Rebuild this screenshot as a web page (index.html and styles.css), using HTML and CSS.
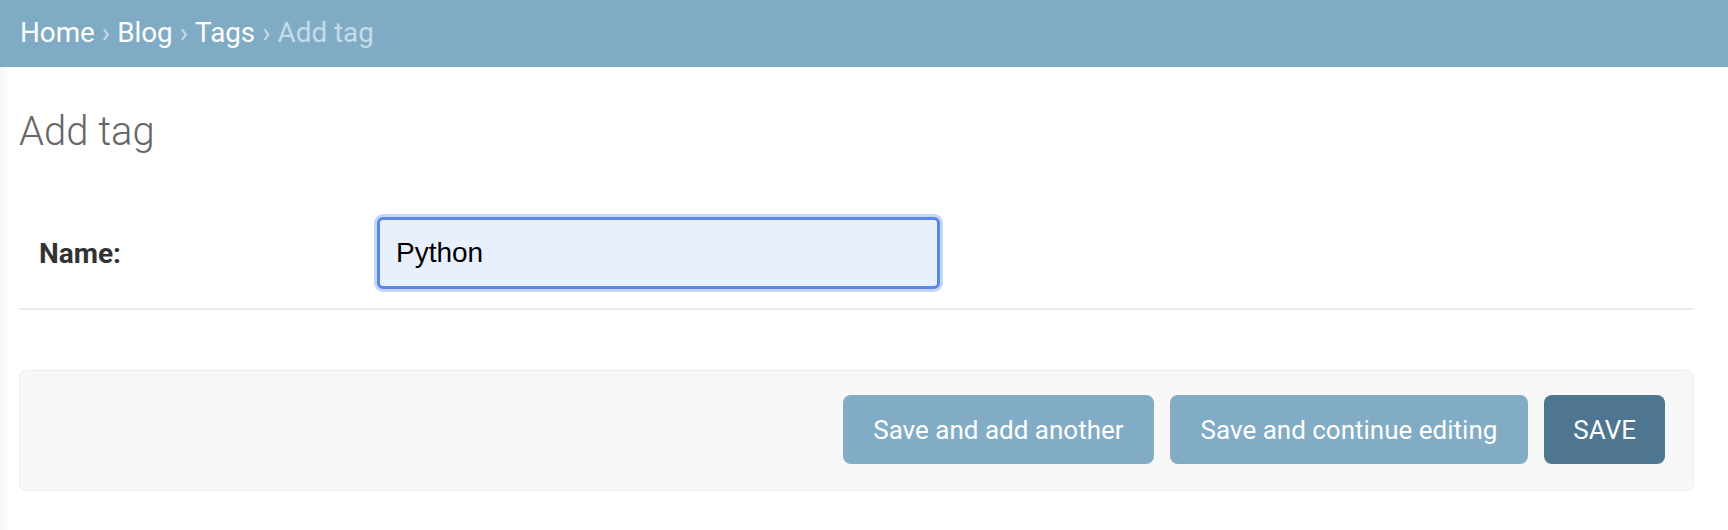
FILE: index.html
```html
<!DOCTYPE html>
<html lang="en">
<head>
<meta charset="utf-8">
<title>Add tag</title>
<link rel="stylesheet" href="styles.css">
</head>
<body>
<div class="breadcrumbs">
  <a href="#">Home</a><span class="sep">›</span><a href="#">Blog</a><span class="sep">›</span><a href="#">Tags</a><span class="sep">›</span><span class="current">Add tag</span>
</div>
<div class="main">
  <div class="nav-toggle"></div>
  <div class="content">
    <h1 class="title">Add tag</h1>
    <form class="form">
      <div class="form-row">
        <label class="label" for="id_name">Name:</label>
        <input class="input" id="id_name" type="text" value="Python">
      </div>
      <div class="submit-row">
        <button type="button" class="btn btn-light">Save and add another</button>
        <button type="button" class="btn btn-light btn-wide">Save and continue editing</button>
        <button type="button" class="btn btn-default">SAVE</button>
      </div>
    </form>
  </div>
</div>
</body>
</html>
```
FILE: styles.css
```css
html, body {
  margin: 0;
  padding: 0;
  background: #fff;
}
body {
  font-family: Roboto, "Liberation Sans", sans-serif;
  color: #333;
}
.breadcrumbs {
  background: #80abc5;
  color: #c4dce8;
  font-size: 27.8px;
  line-height: 47px;
  padding: 9px 20px 11px;
  white-space: nowrap;
}
.breadcrumbs a {
  color: #fff;
  text-decoration: none;
}
.breadcrumbs .sep {
  padding: 0 7px;
  color: #c4dce8;
}
.breadcrumbs .current {
  color: #c4dce8;
}
.main {
  display: flex;
  min-height: 463px;
}
.nav-toggle {
  width: 8px;
  flex: none;
  background: linear-gradient(to right, #f6f6f6, #fbfbfb);
}
.content {
  flex: 1;
  padding: 41px 34px 0 11px;
}
.title {
  margin: 0 0 40px;
  font-size: 40px;
  font-weight: 300;
  color: #666;
  line-height: 47px;
}
.form-row {
  display: flex;
  align-items: center;
  padding: 22px 20px 19px;
  border-bottom: 2px solid #ebebeb;
}
.label {
  width: 338px;
  flex: none;
  font-weight: 700;
  font-size: 28px;
  color: #333;
}
.input {
  box-sizing: border-box;
  width: 563px;
  height: 72px;
  margin: 0;
  padding: 0 16px;
  border: 3px solid #5a87e3;
  border-radius: 6px;
  box-shadow: 0 0 0 3px #c3d6f6;
  background: #e8f0fe;
  font-family: "Liberation Sans", Arial, sans-serif;
  font-size: 28px;
  color: #000;
  outline: none;
}
.submit-row {
  display: flex;
  justify-content: flex-end;
  gap: 16px;
  margin-top: 60px;
  padding: 24px 28px 26px;
  background: #f8f8f8;
  border: 1px solid #ebebeb;
  border-radius: 8px;
}
.btn {
  height: 69px;
  padding: 0 29px;
  border: none;
  border-radius: 8px;
  color: #fff;
  font-family: Roboto, "Liberation Sans", sans-serif;
  font-size: 26px;
  cursor: pointer;
}
.btn-light {
  background: #82acc6;
  padding: 0 30px;
}
.btn-wide {
  padding: 0 31px;
}
.btn-default {
  background: #4e7690;
}
```
